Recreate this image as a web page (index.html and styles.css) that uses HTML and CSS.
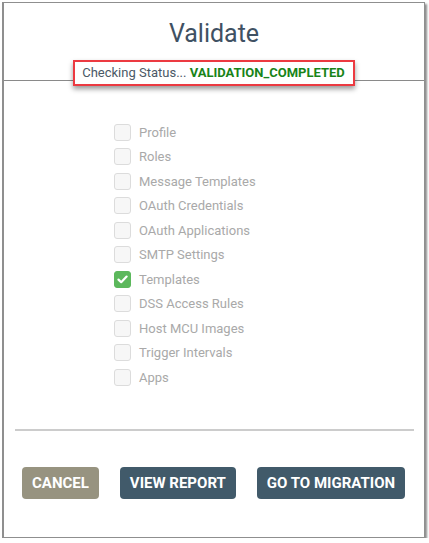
FILE: index.html
```html
<!DOCTYPE html>
<html lang="en">
  <head>
    <meta charset="UTF-8" />
    <meta name="viewport" content="width=device-width, initial-scale=1.0" />
    <title>Validate</title>
    <link rel="stylesheet" href="styles.css">
  </head>
  <body>
    <div class="dialog">
      <div class="header">
        <h1>Validate</h1>
        <div class="status">Checking Status... <b>VALIDATION_COMPLETED</b></div>
      </div>

      <ul class="items">
        <li><span class="box"></span>Profile</li>
        <li><span class="box"></span>Roles</li>
        <li><span class="box"></span>Message Templates</li>
        <li><span class="box"></span>OAuth Credentials</li>
        <li><span class="box"></span>OAuth Applications</li>
        <li><span class="box"></span>SMTP Settings</li>
        <li>
          <span class="box checked">
            <svg width="11" height="9" viewBox="0 0 11 9"><path d="M1.5 4.6 4.2 7.2 9.6 1.6" fill="none" stroke="#fff" stroke-width="2.2" stroke-linecap="round" stroke-linejoin="round"/></svg>
          </span>Templates
        </li>
        <li><span class="box"></span>DSS Access Rules</li>
        <li><span class="box"></span>Host MCU Images</li>
        <li><span class="box"></span>Trigger Intervals</li>
        <li><span class="box"></span>Apps</li>
      </ul>

      <div class="footer">
        <button class="btn cancel">CANCEL</button>
        <button class="btn">VIEW REPORT</button>
        <button class="btn">GO TO MIGRATION</button>
      </div>
    </div>
  </body>
</html>
```

FILE: styles.css
```css
body {
  margin: 0;
  padding: 0;
  font-family: Roboto, "Liberation Sans", sans-serif;
  background: #fff;
}

.dialog {
  margin: 2px 0 0 2px;
  width: 420px;
  height: 534px;
  border: 1px solid #8f8f8f;
  border-left-width: 2px;
  box-shadow: 2px 2px 2px rgba(0, 0, 0, 0.45);
  background: #fff;
  display: flex;
  flex-direction: column;
}

.header {
  border-bottom: 1px solid #8a8a8a;
  padding-top: 16px;
  height: 61px;
  display: flex;
  flex-direction: column;
  align-items: center;
}

h1 {
  margin: 0;
  font-size: 25px;
  font-weight: 400;
  line-height: 30px;
  color: #3f5163;
}

.status {
  margin-top: 11px;
  position: relative;
  z-index: 1;
  background: #fff;
  border: 2px solid #ec3a41;
  padding: 3px 8px 4px 7px;
  font-size: 13px;
  line-height: 15px;
  color: #4b5966;
  box-shadow: 0 3px 5px rgba(0, 0, 0, 0.4);
}

.status b {
  color: #188418;
  font-weight: 700;
}

.items {
  list-style: none;
  margin: 39px 0 0;
  padding: 0 0 0 110px;
}

.items li {
  height: 24.5px;
  display: flex;
  align-items: center;
  font-size: 13px;
  color: #a9a9a9;
}

.box {
  width: 15px;
  height: 15px;
  border: 1px solid #dcdcdc;
  border-radius: 3px;
  background: #f7f7f7;
  margin-right: 8px;
  display: flex;
  align-items: center;
  justify-content: center;
}

.box.checked {
  background: #5cb85c;
  border-color: #5cb85c;
}

.footer {
  margin: 39px 10px 0 11px;
  border-top: 2px solid #cccccc;
  padding: 36px 0 0 7px;
  display: flex;
  gap: 21px;
}

.btn {
  height: 32px;
  padding: 0 10px;
  border: none;
  border-radius: 4px;
  background: #415a6a;
  color: #fff;
  font-family: Roboto, "Liberation Sans", sans-serif;
  font-size: 15px;
  font-weight: 700;
  letter-spacing: 0;
  cursor: pointer;
}

.btn.cancel {
  background: #979380;
}
```
